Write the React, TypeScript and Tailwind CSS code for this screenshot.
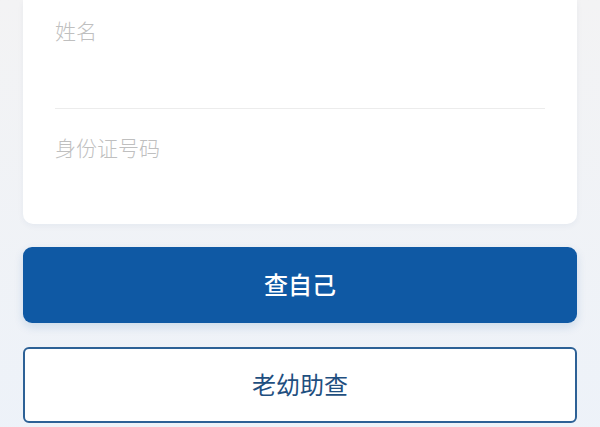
export default function App() {
  return (
    <div
      className="min-h-screen bg-gradient-to-b from-[#f3f3f4] to-[#edf2f9] px-[23px] pb-8"
      style={{ fontFamily: '"Noto Sans", "Noto Sans CJK SC", sans-serif' }}
    >
      {/* form card, top part scrolled out of view */}
      <div className="rounded-b-[10px] bg-white px-8 shadow-[0_2px_6px_rgba(20,60,120,0.05)]">
        <div className="pt-[19px] pb-[65px]">
          <div className="text-[21px] leading-6 font-light text-[#bfbfbf]">姓名</div>
        </div>
        <div className="h-px bg-[#ececec]" />
        <div className="pt-[27px] pb-[64px]">
          <div className="text-[21px] leading-6 font-light text-[#bfbfbf]">身份证号码</div>
        </div>
      </div>

      <button className="mt-[23px] flex h-[76px] w-full items-center justify-center rounded-[9px] bg-[#0f59a4] text-[24px] font-medium text-white shadow-[0_4px_10px_rgba(15,89,164,0.15)]">
        查自己
      </button>

      <button className="mt-[24px] flex h-[76px] w-full items-center justify-center rounded-[6px] border-2 border-[#2d6196] bg-white text-[24px] text-[#1f4f80]">
        老幼助查
      </button>
    </div>
  );
}
